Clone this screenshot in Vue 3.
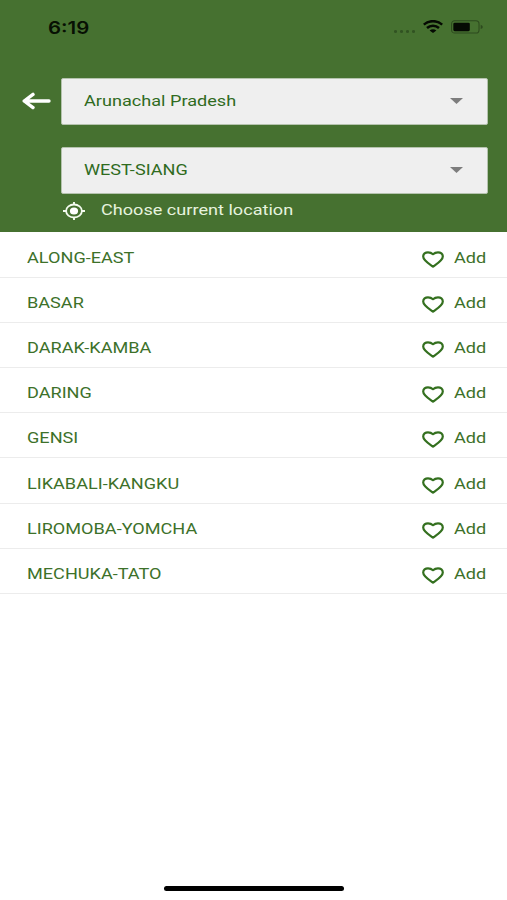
<script setup>
const selects = ['Arunachal Pradesh', 'WEST-SIANG']
const blocks = [
  'ALONG-EAST',
  'BASAR',
  'DARAK-KAMBA',
  'DARING',
  'GENSI',
  'LIKABALI-KANGKU',
  'LIROMOBA-YOMCHA',
  'MECHUKA-TATO',
]
</script>

<template>
  <div class="screen">
    <header class="header">
      <div class="status">
        <span class="wide time">6:19</span>
        <div class="indicators">
          <span class="dots"><i v-for="n in 4" :key="n"></i></span>
          <svg class="wifi" viewBox="0 0 20 13" preserveAspectRatio="none">
            <g fill="none" stroke="#050a03" stroke-width="2.5">
              <path d="M0.8 4.6C5.8 0 14.2 0 19.2 4.6" />
              <path d="M4 8C7.4 4.9 12.6 4.9 16 8" />
            </g>
            <path d="M6.6 10.4C8.6 8.8 11.4 8.8 13.4 10.4L10 13Z" fill="#050a03" />
          </svg>
          <svg class="battery" viewBox="0 0 33 14">
            <rect x="0.6" y="0.6" width="28.3" height="12.6" rx="3.2" fill="none" stroke="#2d4a1e" stroke-width="1.1" />
            <rect x="2.4" y="2.5" width="17" height="8.8" rx="1.4" fill="#050a03" />
            <path d="M30.6 4.8Q32.8 5.6 32.8 6.9Q32.8 8.2 30.6 9Z" fill="#2d4a1e" />
          </svg>
        </div>
      </div>
      <div class="form">
        <svg class="back" viewBox="0 0 30 18">
          <path d="M2.2 9H27M11 2.4L2.2 9L11 15.6" fill="none" stroke="#fff" stroke-width="3.4" stroke-linecap="round" stroke-linejoin="round" />
        </svg>
        <div class="selects">
          <div v-for="s in selects" :key="s" class="select">
            <span class="wide">{{ s }}</span>
            <svg class="caret" viewBox="0 0 13 6"><path d="M0 0H13L6.5 6Z" fill="#7d7d7d" /></svg>
          </div>
          <div class="location">
            <svg class="target" viewBox="0 0 22 18" preserveAspectRatio="none">
              <ellipse cx="11" cy="9" rx="7.9" ry="6.5" fill="none" stroke="#f4fbef" stroke-width="1.8" />
              <ellipse cx="11" cy="9" rx="4.1" ry="3.5" fill="#fff" />
              <path d="M11 0V3M11 15V18M0 9H3.6M18.4 9H22" stroke="#f4fbef" stroke-width="1.9" />
            </svg>
            <span class="wide">Choose current location</span>
          </div>
        </div>
      </div>
    </header>
    <main class="list">
      <div v-for="b in blocks" :key="b" class="row">
        <span class="wide name">{{ b }}</span>
        <svg class="heart" viewBox="0 0 22 17">
          <path d="M11 15.6C7 12.6 1.2 9.3 1.2 5.4C1.2 3 3.3 1.3 6 1.3C8 1.3 9.9 2.2 11 3.2C12.1 2.2 14 1.3 16 1.3C18.7 1.3 20.8 3 20.8 5.4C20.8 9.3 15 12.6 11 15.6Z" fill="none" stroke="#34701f" stroke-width="2.2" stroke-linejoin="round" />
        </svg>
        <span class="wide add">Add</span>
      </div>
    </main>
    <div class="home"></div>
  </div>
</template>

<style>
body {
  margin: 0;
  background: #fff;
}
</style>

<style scoped>
.screen {
  width: 507px;
  height: 900px;
  display: flex;
  flex-direction: column;
  align-items: center;
  overflow: hidden;
  background: #fff;
  font-family: Roboto, "Liberation Sans", sans-serif;
  font-size: 15.3px;
  line-height: 20px;
  color: #3d712a;
}
.wide {
  display: block;
  white-space: nowrap;
  transform: scaleX(1.184);
  transform-origin: left center;
}
.header {
  box-sizing: border-box;
  width: 100%;
  height: 232px;
  flex: none;
  background: #467130;
}
.status {
  box-sizing: border-box;
  height: 78px;
  padding: 17px 24px 0 48px;
  display: flex;
  justify-content: space-between;
  align-items: flex-start;
}
.time {
  font-family: Inter, sans-serif;
  font-weight: 600;
  font-size: 17px;
  line-height: 22px;
  color: #071003;
  transform: scaleX(1.2);
}
.indicators {
  display: flex;
  align-items: flex-start;
  padding-top: 3px;
}
.dots {
  display: flex;
  gap: 3px;
  padding: 10px 8px 0 0;
}
.dots i {
  width: 3px;
  height: 2.5px;
  border-radius: 50%;
  background: #315322;
}
.wifi {
  width: 20px;
  height: 13px;
  margin-right: 8px;
}
.battery {
  width: 32px;
  height: 14px;
}
.form {
  display: flex;
  padding: 0 19px 0 22px;
}
.back {
  width: 30px;
  height: 18px;
  margin: 14px 8.5px 0 0;
  flex: none;
}
.selects {
  flex: 1;
}
.select {
  box-sizing: border-box;
  height: 47px;
  margin-bottom: 22px;
  padding: 0 24px 1px 22.5px;
  display: flex;
  align-items: center;
  justify-content: space-between;
  background: #efefef;
  border: 1px solid #b5c3ae;
  border-radius: 2px;
  color: #2f6b1e;
}
.caret {
  width: 13px;
  height: 6px;
}
.location {
  display: flex;
  align-items: center;
  margin-top: -16px;
  padding-left: 2px;
  color: #e6f3df;
}
.target {
  width: 22px;
  height: 18px;
  margin: 1px 16.5px 0 0;
}
.list {
  width: 100%;
  flex: 1;
}
.row {
  box-sizing: border-box;
  height: 45.1px;
  padding: 7px 20px 0 27px;
  display: flex;
  align-items: center;
  box-shadow: 0 1px #ececec;
}
.name {
  margin-right: auto;
}
.heart {
  width: 22px;
  height: 17px;
  margin: 3px 10px 0 0;
}
.add {
  width: 33px;
}
.home {
  width: 180px;
  height: 5px;
  margin-bottom: 9px;
  border-radius: 3px;
  background: #000;
}
</style>
